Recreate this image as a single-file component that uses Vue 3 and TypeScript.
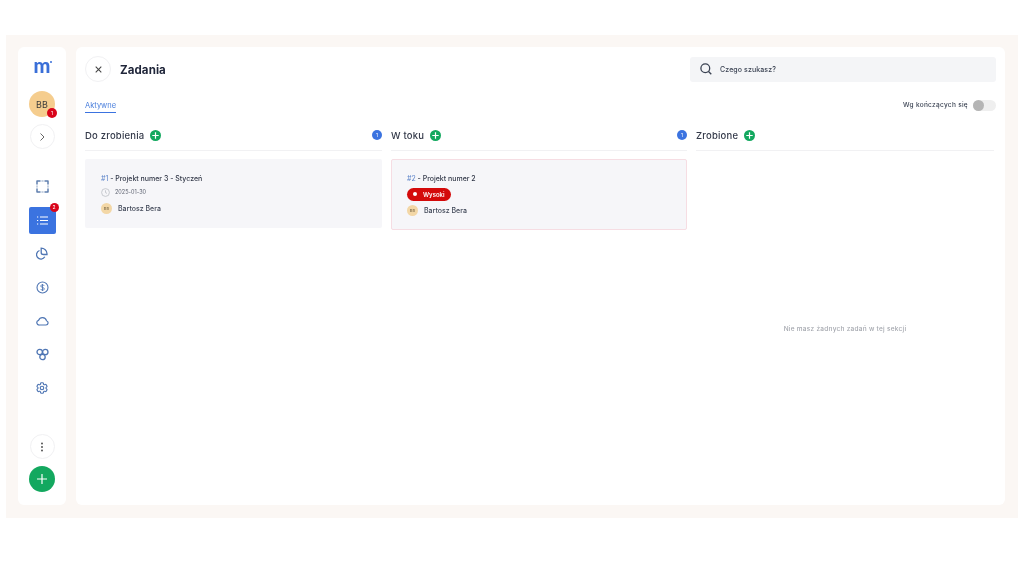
<script setup lang="ts">
interface Task {
  id: string
  title: string
  date?: string
  priority?: string
}
interface Column {
  name: string
  count: boolean
  tasks: Task[]
}
const columns: Column[] = [
  { name: 'Do zrobienia', count: true, tasks: [{ id: '#1', title: ' - Projekt numer 3 - Styczeń', date: '2025-01-30' }] },
  { name: 'W toku', count: true, tasks: [{ id: '#2', title: ' - Projekt numer 2', priority: 'Wysoki' }] },
  { name: 'Zrobione', count: false, tasks: [] },
]
</script>

<template>
  <div class="page">
    <div class="frame">
      <aside class="sidebar">
        <div class="logo">m<span class="logo-dot"></span></div>
        <div class="avatar">BB<span class="avatar-badge">1</span></div>
        <button class="round chevron">
          <svg width="10" height="10" viewBox="0 0 10 10"><path d="M3.5 1.5 7 5 3.5 8.5" fill="none" stroke="#666" stroke-width="1" /></svg>
        </button>
        <nav class="nav">
          <div class="nav-item">
            <svg width="13" height="13" viewBox="0 0 13 13" fill="none" stroke="#5f7fae" stroke-width="1.500" stroke-linejoin="round" stroke-linecap="round">
              <path d="M1 4V1h3M9 1h3v3M12 9v3H9M4 12H1V9" />
              <path d="M5.800 1h1.400M5.800 12h1.400M1 5.800v1.400M12 5.800v1.400" stroke-width="0.700" />
            </svg>
          </div>
          <div class="nav-item active">
            <svg width="11" height="9" viewBox="0 0 11 9" fill="none" stroke="#fff" stroke-width="1.200">
              <path d="M3 1h8M3 4.500h8M3 8h8M0 1h1.200M0 4.500h1.200M0 8h1.200" />
            </svg>
            <span class="nav-badge">2</span>
          </div>
          <div class="nav-item">
            <svg width="12" height="13" viewBox="0 0 12 13" fill="none" stroke="#4f76b4" stroke-width="1.300">
              <path d="M5.200 1.200c3 0 5.800 2.300 5.800 5.600V7.500H7.200a2 2 0 0 1-2-2z" />
              <path d="M3.500 3.500A4.400 4.400 0 1 0 8.800 9.800" />
            </svg>
          </div>
          <div class="nav-item">
            <svg width="13" height="13" viewBox="0 0 13 13" fill="none" stroke="#4f76b4" stroke-width="1.100">
              <circle cx="6.500" cy="6.500" r="5.500" />
              <path d="M8.200 4.800c-.3-.7-1-1-1.700-1-1 0-1.700.5-1.700 1.300 0 1.800 3.500.9 3.500 2.800 0 .8-.8 1.300-1.800 1.300-.8 0-1.500-.4-1.800-1.100M6.500 3v7" stroke-width="0.900" />
            </svg>
          </div>
          <div class="nav-item">
            <svg width="13" height="10" viewBox="0 0 13 10" fill="none" stroke="#4f76b4" stroke-width="1.200">
              <path d="M3.500 9H10a2.200 2.200 0 0 0 .5-4.300A4.200 4.200 0 0 0 2.600 4.300 2.400 2.400 0 0 0 3.500 9z" />
            </svg>
          </div>
          <div class="nav-item">
            <svg width="13" height="13" viewBox="0 0 13 13" fill="none" stroke="#4f76b4" stroke-width="1.300">
              <circle cx="3.700" cy="4" r="2.700" />
              <circle cx="9.300" cy="4" r="2.700" />
              <circle cx="6.500" cy="9" r="2.700" />
            </svg>
          </div>
          <div class="nav-item">
            <svg width="14" height="14" viewBox="0 0 24 24" fill="none" stroke="#4f76b4" stroke-width="2">
              <path d="M9.594 3.940c.09-.542.56-.94 1.110-.94h2.593c.55 0 1.020.398 1.110.94l.213 1.281c.063.374.313.686.645.870.074.040.147.083.220.127.325.196.720.257 1.075.124l1.217-.456a1.125 1.125 0 0 1 1.370.490l1.296 2.247a1.125 1.125 0 0 1-.260 1.431l-1.003.827c-.293.241-.438.613-.430.992a7.723 7.723 0 0 1 0 .255c-.008.378.137.750.430.991l1.004.827c.424.350.534.955.260 1.430l-1.298 2.247a1.125 1.125 0 0 1-1.369.491l-1.217-.456c-.355-.133-.750-.072-1.076.124a6.470 6.470 0 0 1-.220.128c-.331.183-.581.495-.644.869l-.213 1.281c-.090.543-.560.940-1.110.940h-2.594c-.550 0-1.019-.398-1.110-.940l-.213-1.281c-.062-.374-.312-.686-.644-.870a6.520 6.520 0 0 1-.220-.127c-.325-.196-.720-.257-1.076-.124l-1.217.456a1.125 1.125 0 0 1-1.369-.490l-1.297-2.247a1.125 1.125 0 0 1 .260-1.431l1.004-.827c.292-.240.437-.613.430-.991a6.932 6.932 0 0 1 0-.255c.007-.380-.138-.751-.430-.992l-1.004-.827a1.125 1.125 0 0 1-.260-1.430l1.297-2.247a1.125 1.125 0 0 1 1.370-.491l1.216.456c.356.133.751.072 1.076-.124.072-.044.146-.086.220-.128.332-.183.582-.495.644-.869l.214-1.280z" />
              <circle cx="12" cy="12" r="3" />
            </svg>
          </div>
        </nav>
        <div class="side-bottom">
          <button class="round">
            <svg width="4" height="10" viewBox="0 0 4 10" fill="#444"><circle cx="2" cy="1.500" r="0.900" /><circle cx="2" cy="5" r="0.900" /><circle cx="2" cy="8.500" r="0.900" /></svg>
          </button>
          <button class="add-big">
            <svg width="10" height="10" viewBox="0 0 10 10" stroke="#fff" stroke-width="1.200"><path d="M5 0v10M0 5h10" /></svg>
          </button>
        </div>
      </aside>

      <main class="main">
        <header class="top">
          <button class="round close">
            <svg width="7" height="7" viewBox="0 0 8 8" stroke="#444" stroke-width="1.200"><path d="M.8.8l6.400 6.400M7.200.8.8 7.200" /></svg>
          </button>
          <h1 class="title">Zadania</h1>
          <label class="search">
            <svg width="12" height="12" viewBox="0 0 12 12" fill="none" stroke="#3a4252" stroke-width="1.300">
              <circle cx="5.300" cy="5.300" r="4.400" /><path d="M8.500 8.500 11.300 11.300" />
            </svg>
            <span>Czego szukasz?</span>
          </label>
        </header>

        <div class="tabs-row">
          <span class="tab">Aktywne</span>
          <div class="toggle-wrap">
            <span>Wg kończących się</span>
            <span class="toggle"><span class="knob"></span></span>
          </div>
        </div>

        <section class="board">
          <div v-for="col in columns" :key="col.name" class="col">
            <div class="col-head">
              <span class="col-name">{{ col.name }}</span>
              <span class="col-add">
                <svg width="7" height="7" viewBox="0 0 7 7" stroke="#fff" stroke-width="1.200"><path d="M3.500.3v6.400M.3 3.500h6.400" /></svg>
              </span>
              <span v-if="col.count" class="col-count">1</span>
            </div>
            <div class="col-body">
              <article
                v-for="t in col.tasks"
                :key="t.id"
                class="card"
                :class="{ urgent: t.priority }"
              >
                <div class="card-title"><span class="card-id">{{ t.id }}</span>{{ t.title }}</div>
                <div v-if="t.date" class="card-date">
                  <svg width="9" height="9" viewBox="0 0 9 9" fill="none" stroke="#b5b8bf" stroke-width="0.700">
                    <circle cx="4.500" cy="4.500" r="3.900" /><path d="M4.500 2.300v2.300l1.500.8" />
                  </svg>
                  <span>{{ t.date }}</span>
                </div>
                <div v-if="t.priority" class="card-priority"><span class="dot"></span>{{ t.priority }}</div>
                <div class="card-user">
                  <span class="mini-avatar">BB</span>
                  <span>Bartosz Bera</span>
                </div>
              </article>
              <p v-if="!col.tasks.length" class="empty">Nie masz żadnych zadań w tej sekcji</p>
            </div>
          </div>
        </section>
      </main>
    </div>
  </div>
</template>

<style scoped>
.page {
  box-sizing: border-box;
  width: 1024px;
  height: 576px;
  padding: 35px 6px 58px;
  background: #fff;
  font-family: Inter, "Noto Sans", sans-serif;
  color: #2b3142;
  overflow: hidden;
  filter: blur(0.3px);
}
.frame {
  display: flex;
  gap: 10px;
  height: 100%;
  box-sizing: border-box;
  padding: 12px 13px 13px 12px;
  background: #fbf7f4;
}
.sidebar {
  width: 48px;
  flex: none;
  display: flex;
  flex-direction: column;
  align-items: center;
  box-sizing: border-box;
  padding-top: 10px;
  background: #fff;
  border-radius: 6px;
}
.logo {
  position: relative;
  height: 22px;
  line-height: 17px;
  font-size: 20px;
  font-weight: 900;
  color: #3a6fd8;
  font-family: Lato, sans-serif;
}
.logo-dot {
  position: absolute;
  top: 4px;
  right: -2px;
  width: 2px;
  height: 2px;
  border-radius: 50%;
  background: #3a6fd8;
}
.avatar {
  position: relative;
  width: 26px;
  height: 26px;
  margin-top: 12px;
  border-radius: 50%;
  background: #f5cd8e;
  display: flex;
  align-items: center;
  justify-content: center;
  font-size: 9px;
  color: #3a3a3a;
}
.avatar-badge {
  position: absolute;
  right: -2px;
  bottom: -1px;
  width: 10px;
  height: 10px;
  border-radius: 50%;
  background: #d9041a;
  color: #fff;
  font-size: 5px;
  text-align: center;
  line-height: 10px;
}
.round {
  width: 25px;
  height: 25px;
  padding: 0;
  border: 1px solid #f1f1f3;
  border-radius: 50%;
  background: #fff;
  display: flex;
  align-items: center;
  justify-content: center;
}
.chevron {
  margin-top: 7px;
}
.nav {
  display: flex;
  flex-direction: column;
  align-items: center;
  margin-top: 24px;
}
.nav-item {
  position: relative;
  width: 27px;
  height: 27px;
  margin-bottom: 6.500px;
  display: flex;
  align-items: center;
  justify-content: center;
  border-radius: 2px;
}
.nav-item.active {
  background: #3b73e0;
}
.nav-badge {
  position: absolute;
  top: -4px;
  right: -3px;
  width: 9px;
  height: 9px;
  border-radius: 50%;
  background: #d9041a;
  color: #fff;
  font-size: 5px;
  line-height: 9px;
  text-align: center;
}
.side-bottom {
  margin-top: auto;
  margin-bottom: 13px;
  display: flex;
  flex-direction: column;
  align-items: center;
  gap: 7px;
}
.add-big {
  width: 26px;
  height: 26px;
  padding: 0;
  border: 0;
  border-radius: 50%;
  background: #13a85f;
  display: flex;
  align-items: center;
  justify-content: center;
}
.main {
  flex: 1;
  min-width: 0;
  display: flex;
  flex-direction: column;
  box-sizing: border-box;
  padding: 9px 9px 6px;
  background: #fff;
  border-radius: 6px;
}
.top {
  display: flex;
  align-items: center;
  height: 26px;
}
.close {
  width: 26px;
  height: 26px;
}
.title {
  margin: 1px 0 0 9px;
  font-size: 11.500px;
  font-weight: 700;
  letter-spacing: 0.1px;
  color: #20263a;
}
.search {
  margin-left: auto;
  width: 306px;
  height: 25px;
  box-sizing: border-box;
  padding-left: 10px;
  display: flex;
  align-items: center;
  gap: 8px;
  background: #f4f5f7;
  border-radius: 3px;
  font-size: 7px;
  font-weight: 500;
  letter-spacing: 0.1px;
  color: #3a4252;
}
.tabs-row {
  display: flex;
  align-items: center;
  justify-content: space-between;
  height: 16px;
  margin-top: 15px;
}
.tab {
  display: block;
  font-size: 7.500px;
  line-height: 16px;
  color: #4a7fdc;
  border-bottom: 1px solid #3b73e0;
  height: 14px;
  margin-top: 1px;
}
.toggle-wrap {
  display: flex;
  align-items: center;
  gap: 5px;
  font-size: 6.500px;
  font-weight: 500;
  letter-spacing: 0.3px;
  color: #3a4252;
}
.toggle {
  width: 23px;
  height: 11px;
  border-radius: 6px;
  background: #efefef;
  display: flex;
  align-items: center;
}
.knob {
  width: 11px;
  height: 11px;
  border-radius: 50%;
  background: #b5b5b5;
}
.board {
  flex: 1;
  min-height: 0;
  display: grid;
  grid-template-columns: 297px 296px 298px;
  gap: 9px;
  margin-top: 13px;
}
.col {
  display: flex;
  flex-direction: column;
  min-height: 0;
}
.col-head {
  display: flex;
  align-items: center;
  gap: 6px;
  height: 18px;
  padding-bottom: 6px;
  border-bottom: 1px solid #f1f1f3;
}
.col-name {
  font-size: 9.500px;
  font-weight: 500;
  letter-spacing: 0.2px;
  color: #333949;
}
.col-add {
  width: 11px;
  height: 11px;
  border-radius: 50%;
  background: #13a85f;
  display: flex;
  align-items: center;
  justify-content: center;
}
.col-count {
  margin-left: auto;
  width: 10px;
  height: 10px;
  border-radius: 50%;
  background: #3b73e0;
  color: #fff;
  font-size: 5px;
  line-height: 10px;
  text-align: center;
}
.col-body {
  flex: 1;
  display: flex;
  flex-direction: column;
  padding-top: 8px;
  min-height: 0;
}
.card {
  box-sizing: border-box;
  padding: 14.500px 16px;
  background: #f6f6f9;
  border-radius: 2px;
  display: flex;
  flex-direction: column;
  gap: 5px;
}
.card.urgent {
  border: 1px solid #f6dde3;
  padding: 13.500px 15px;
}
.card-title {
  font-size: 7px;
  line-height: 9px;
  font-weight: 500;
  color: #333949;
}
.card-id {
  color: #5c83c9;
  font-weight: 400;
}
.card-date {
  display: flex;
  align-items: center;
  gap: 5px;
  font-size: 5.500px;
  line-height: 9px;
  color: #5d6270;
}
.card-date + .card-user {
  margin-top: 1px;
}
.card-priority + .card-user {
  margin-top: -1px;
}
.card-priority {
  align-self: flex-start;
  height: 13px;
  box-sizing: border-box;
  padding: 0 6px;
  display: flex;
  align-items: center;
  gap: 6px;
  border-radius: 7px;
  background: #d40a0a;
  color: #fff;
  font-size: 6px;
  font-weight: 600;
}
.dot {
  width: 4px;
  height: 4px;
  border-radius: 50%;
  background: #fff;
}
.card-user {
  display: flex;
  align-items: center;
  gap: 6px;
  font-size: 7px;
  font-weight: 500;
  color: #3f4656;
}
.mini-avatar {
  width: 11px;
  height: 11px;
  border-radius: 50%;
  background: #f3d7a6;
  color: #7b6a4a;
  font-size: 4px;
  display: flex;
  align-items: center;
  justify-content: center;
}
.empty {
  margin: auto 0;
  text-align: center;
  font-size: 6.500px;
  font-weight: 500;
  letter-spacing: 0.26px;
  color: #a4a7ae;
}
</style>
